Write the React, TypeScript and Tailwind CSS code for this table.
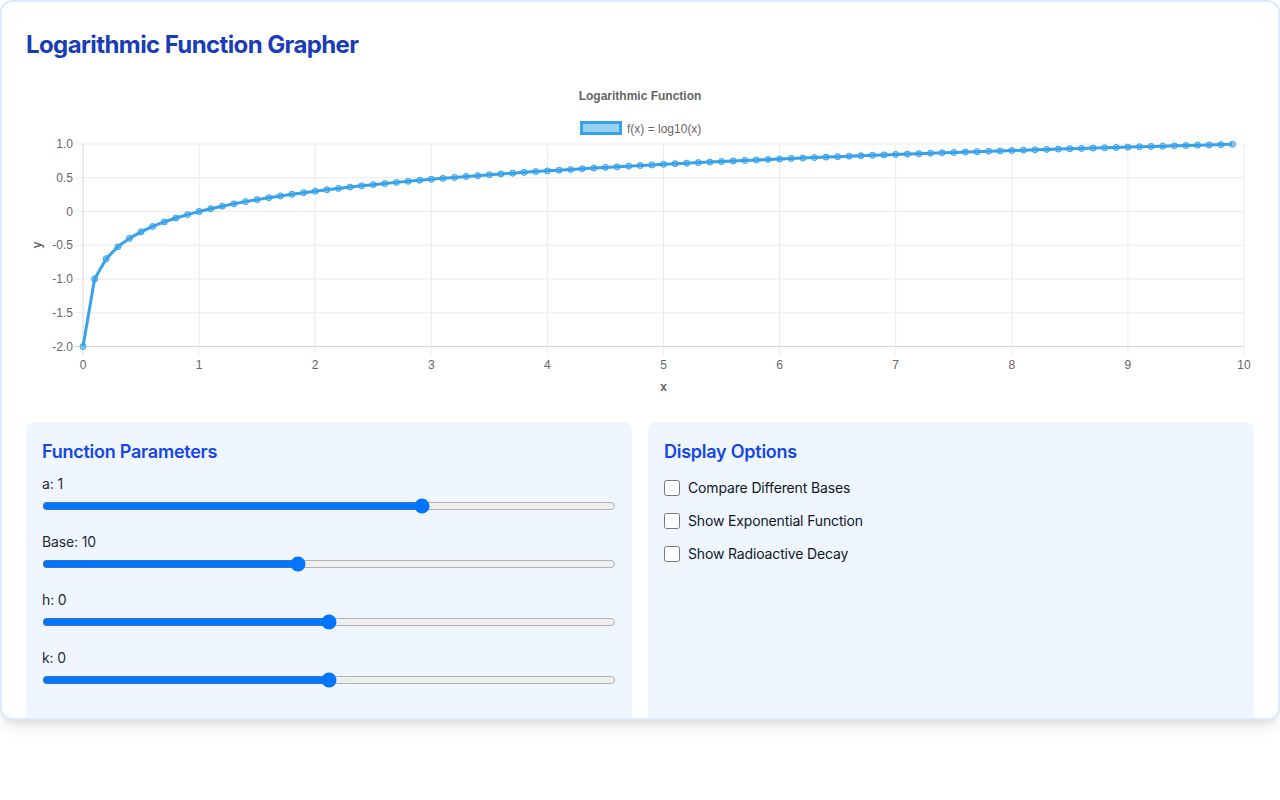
import { useState } from 'react';

const X0 = 83;
const X1 = 1244;
const Y0 = 144;
const Y1 = 346.5;

const sx = (v: number) => X0 + (v / 10) * (X1 - X0);
const sy = (v: number) => Y0 + ((1 - v) / 3) * (Y1 - Y0);

const yTicks = [1, 0.5, 0, -0.5, -1, -1.5, -2];
const xTicks = [0, 1, 2, 3, 4, 5, 6, 7, 8, 9, 10];

function formatY(v: number): string {
  if (v === 0) return '0';
  return v.toFixed(1);
}

function LogChart({ a, base, h, k }: { a: number; base: number; h: number; k: number }) {
  const points: { x: number; y: number }[] = [];
  for (let i = 0; i < 100; i++) {
    const x = i / 10;
    const arg = Math.max(x - h, 0.01);
    const y = a * (Math.log(arg) / Math.log(base)) + k;
    points.push({ x, y });
  }
  const path = points.map((p) => `${sx(p.x).toFixed(2)},${sy(p.y).toFixed(2)}`).join(' ');

  return (
    <svg
      width={1228}
      height={330}
      viewBox="26 74 1228 330"
      className="block"
      style={{ fontFamily: '"Liberation Sans", Arial, sans-serif' }}
    >
      {/* Title + legend */}
      <text x={640} y={96.5} textAnchor="middle" dominantBaseline="middle" fontSize={12} fontWeight="bold" fill="#666">
        Logarithmic Function
      </text>
      <rect x={581.5} y={122.5} width={39} height={11} fill="rgba(54,162,235,0.5)" stroke="#36a2eb" strokeWidth={3} />
      <text x={627} y={129.5} dominantBaseline="middle" fontSize={12} fill="#666">
        f(x) = log{base}(x)
      </text>

      {/* Grid */}
      {yTicks.map((t) => (
        <line key={`gy${t}`} x1={X0 - 8} x2={X1} y1={sy(t)} y2={sy(t)} stroke={t === -2 ? '#d6d6d6' : '#ececec'} strokeWidth={1} />
      ))}
      {xTicks.map((t) => (
        <line key={`gx${t}`} x1={sx(t)} x2={sx(t)} y1={Y0} y2={Y1 + 8} stroke={t === 0 ? '#d6d6d6' : '#ececec'} strokeWidth={1} />
      ))}

      {/* Tick labels */}
      {yTicks.map((t) => (
        <text key={`ly${t}`} x={73} y={sy(t) + 1} textAnchor="end" dominantBaseline="middle" fontSize={12} fill="#666">
          {formatY(t)}
        </text>
      ))}
      {xTicks.map((t) => (
        <text key={`lx${t}`} x={sx(t)} y={366} textAnchor="middle" dominantBaseline="middle" fontSize={12} fill="#666">
          {t}
        </text>
      ))}

      {/* Axis titles */}
      <text x={663.5} y={387.5} textAnchor="middle" dominantBaseline="middle" fontSize={12} fontWeight="bold" fill="#666">
        x
      </text>
      <text
        x={38}
        y={245}
        textAnchor="middle"
        dominantBaseline="middle"
        fontSize={12}
        fontWeight="bold"
        fill="#666"
        transform="rotate(-90 38 245)"
      >
        y
      </text>

      {/* Data */}
      <polyline points={path} fill="none" stroke="#36a2eb" strokeWidth={3} strokeLinejoin="round" />
      {points.map((p, i) => (
        <circle key={i} cx={sx(p.x)} cy={sy(p.y)} r={3} fill="rgba(54,162,235,0.5)" stroke="#36a2eb" strokeWidth={1} />
      ))}
    </svg>
  );
}

interface SliderProps {
  label: string;
  value: number;
  min: number;
  max: number;
  step: number;
  onChange: (v: number) => void;
}

function Slider({ label, value, min, max, step, onChange }: SliderProps) {
  return (
    <div className="mb-[18px]">
      <label className="block text-sm tracking-[-0.15px] text-gray-800">
        {label}: {value}
      </label>
      <input
        type="range"
        min={min}
        max={max}
        step={step}
        value={value}
        onChange={(e) => onChange(parseFloat(e.target.value))}
        className="m-0 mt-1 block h-4 w-full"
      />
    </div>
  );
}

export default function App() {
  const [a, setA] = useState(1);
  const [base, setBase] = useState(10);
  const [h, setH] = useState(0);
  const [k, setK] = useState(0);
  const [compare, setCompare] = useState(false);
  const [exponential, setExponential] = useState(false);
  const [decay, setDecay] = useState(false);

  const options = [
    { label: 'Compare Different Bases', checked: compare, set: setCompare },
    { label: 'Show Exponential Function', checked: exponential, set: setExponential },
    { label: 'Show Radioactive Decay', checked: decay, set: setDecay },
  ];

  return (
    <div className="min-h-screen bg-white font-['Inter',sans-serif]">
      <div className="h-[720px] overflow-hidden rounded-xl border-2 border-blue-100 bg-white p-6 shadow-lg">
        <h1 className="mt-[3px] mb-[13px] text-2xl font-bold tracking-[-0.6px] text-blue-800">
          Logarithmic Function Grapher
        </h1>

        <LogChart a={a} base={base} h={h} k={k} />

        <div className="mt-[18px] grid grid-cols-2 gap-4">
          {/* Parameters */}
          <div className="rounded-lg bg-blue-50 p-4">
            <h2 className="mb-2 text-lg font-semibold tracking-[-0.25px] text-blue-700">Function Parameters</h2>
            <Slider label="a" value={a} min={-3} max={3} step={0.1} onChange={setA} />
            <Slider label="Base" value={base} min={2} max={20} step={1} onChange={setBase} />
            <Slider label="h" value={h} min={-5} max={5} step={0.1} onChange={setH} />
            <Slider label="k" value={k} min={-5} max={5} step={0.1} onChange={setK} />
          </div>

          {/* Display options */}
          <div className="rounded-lg bg-blue-50 p-4">
            <h2 className="mb-3 text-lg font-semibold tracking-[-0.25px] text-blue-700">Display Options</h2>
            <div className="flex flex-col gap-[13px]">
              {options.map((o) => (
                <label key={o.label} className="flex h-5 items-center text-sm tracking-[-0.15px] text-gray-900">
                  <input
                    type="checkbox"
                    checked={o.checked}
                    onChange={(e) => o.set(e.target.checked)}
                    className="m-0 mr-2 h-4 w-4"
                  />
                  {o.label}
                </label>
              ))}
            </div>
          </div>
        </div>
      </div>
    </div>
  );
}
